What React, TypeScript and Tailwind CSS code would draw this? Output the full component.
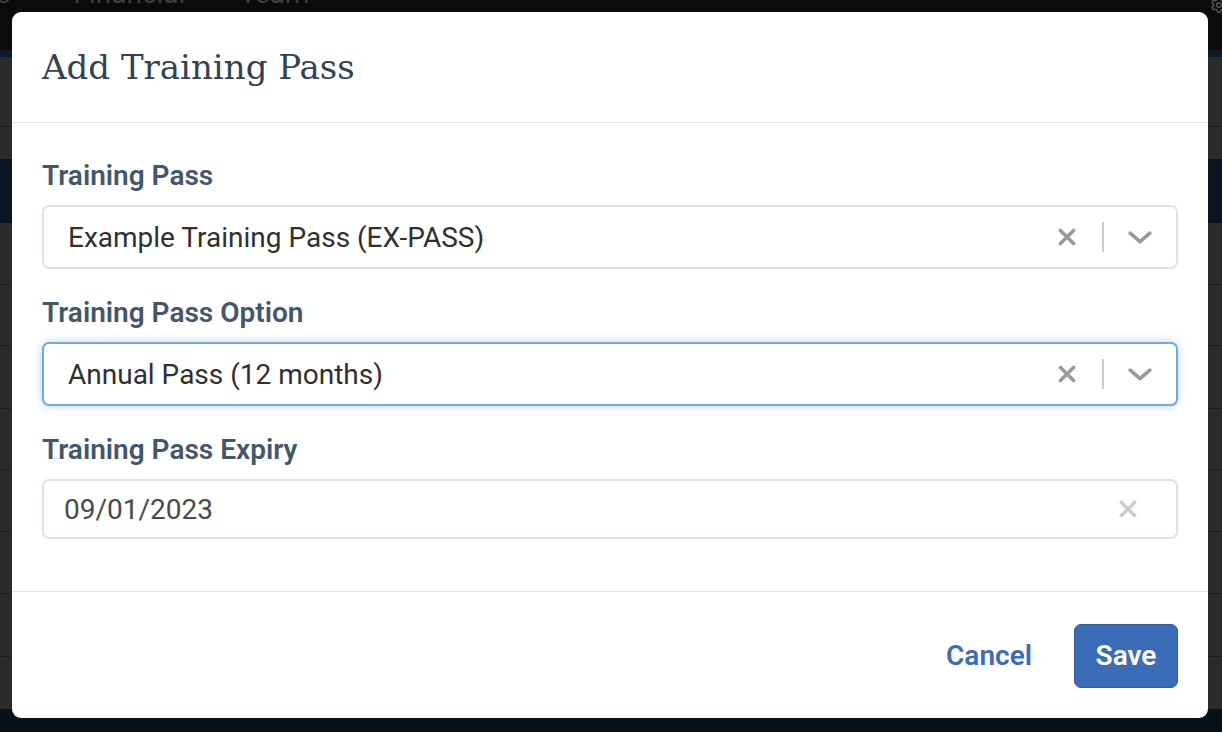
import { Settings } from "lucide-react";

const ROWS = [62, 61, 63, 61, 62, 62, 63];

function ClearIcon({ className }: { className?: string }) {
  return (
    <svg viewBox="0 0 18 18" className={className} fill="none" aria-hidden="true">
      <path d="M2.4 2.4 15.6 15.6M15.6 2.4 2.4 15.6" stroke="currentColor" strokeWidth="3.6" strokeLinecap="round" />
    </svg>
  );
}

function ChevronIcon({ className }: { className?: string }) {
  return (
    <svg viewBox="0 0 24 13" className={className} fill="none" aria-hidden="true">
      <path d="M2.2 2.2 12 10.6l9.8-8.4" stroke="currentColor" strokeWidth="3.6" strokeLinecap="round" strokeLinejoin="round" />
    </svg>
  );
}

interface SelectProps {
  value: string;
  focused?: boolean;
}

function SelectField({ value, focused }: SelectProps) {
  return (
    <div
      className={`flex h-[64px] items-center rounded-[7px] bg-white pl-[24px] ${
        focused
          ? "border-2 border-[#72a7e6] shadow-[0_0_9px_rgba(102,158,228,0.45)]"
          : "border-2 border-[#dbe2ea]"
      }`}
    >
      <span className="flex-1 pt-[1px] text-[28px] text-[#303030]">{value}</span>
      <div className="flex items-center">
        <div className="flex w-[71px] justify-center">
          <ClearIcon className="h-[18px] w-[18px] text-[#999999]" />
        </div>
        <div className="h-[30px] w-[2px] bg-[#cccccc]" />
        <div className="flex w-[72px] justify-center">
          <ChevronIcon className="h-[13px] w-[24px] text-[#999999]" />
        </div>
      </div>
    </div>
  );
}

function Label({ children }: { children: string }) {
  return (
    <div className="h-[32px] pt-[2px] text-[28px] leading-[32px] font-semibold text-[#46566a]">{children}</div>
  );
}

function Backdrop() {
  return (
    <div className="flex h-[732px] flex-col">
      <div className="flex h-[50px] bg-[#0b0b0b] text-[28px] leading-[28px] text-[#3f3f3f]">
        <div className="-mt-[20px] flex w-full items-start">
          <span className="ml-[-4px]">s</span>
          <span className="ml-[63px]">Financial</span>
          <span className="ml-[54px]">Team</span>
          <span className="flex-1" />
          <Settings className="mt-[16px] mr-[-6px] h-[18px] w-[18px] text-[#555555]" />
        </div>
      </div>
      <div className="h-[7px] bg-[#0e1a2a]" />
      <div className="h-[70px] border-b border-[#1e1e1e] bg-[#2b2b2b]" />
      <div className="h-[32px] bg-[#2b2b2b]" />
      <div className="h-[64px] bg-[#0a1321]" />
      {ROWS.map((h, i) => (
        <div key={i} style={{ height: h }} className="border-b border-[#1f1f1f] bg-[#2a2a2a]" />
      ))}
      <div className="h-[52px] bg-[#2a2a2a]" />
      <div className="flex-1 bg-[#0a101a]" />
    </div>
  );
}

export default function App() {
  return (
    <div className="relative h-[732px] w-full overflow-hidden bg-[#0b0b0b] font-['Roboto','Liberation_Sans',sans-serif]">
      <Backdrop />
      <div className="absolute inset-0 p-[12px] pr-[14px] pb-[14px]">
        <div className="flex h-full flex-col rounded-[9px] bg-white">
          <div className="flex h-[111px] items-center border-b border-[#e3e3e3] px-[30px]">
            <h1 className="text-[34px] text-[#34414f] font-['DejaVu_Serif','Liberation_Serif',serif]">
              Add Training Pass
            </h1>
          </div>
          <div className="flex flex-col px-[30px] pt-[35px] pb-[52px]">
            <Label>Training Pass</Label>
            <div className="mt-[15px]">
              <SelectField value="Example Training Pass (EX-PASS)" />
            </div>
            <div className="mt-[26px]">
              <Label>Training Pass Option</Label>
            </div>
            <div className="mt-[15px]">
              <SelectField value="Annual Pass (12 months)" focused />
            </div>
            <div className="mt-[26px]">
              <Label>Training Pass Expiry</Label>
            </div>
            <div className="mt-[15px] flex h-[60px] items-center rounded-[7px] border-2 border-[#dbe2ea] pl-[20px] pr-[39px]">
              <span className="flex-1 pt-[1px] text-[28px] text-[#4a4a4a]">09/01/2023</span>
              <ClearIcon className="h-[18px] w-[18px] text-[#cccccc]" />
            </div>
          </div>
          <div className="flex flex-1 items-center justify-end gap-[42px] border-t border-[#e3e3e3] px-[30px]">
            <button type="button" className="pt-[1px] text-[28px] font-semibold text-[#3a6cb8]">
              Cancel
            </button>
            <button
              type="button"
              className="mt-[1px] h-[64px] w-[104px] rounded-[7px] border border-[#2f5ea5] bg-[#3a6cb8] text-[28px] font-semibold text-white"
            >
              Save
            </button>
          </div>
        </div>
      </div>
    </div>
  );
}
